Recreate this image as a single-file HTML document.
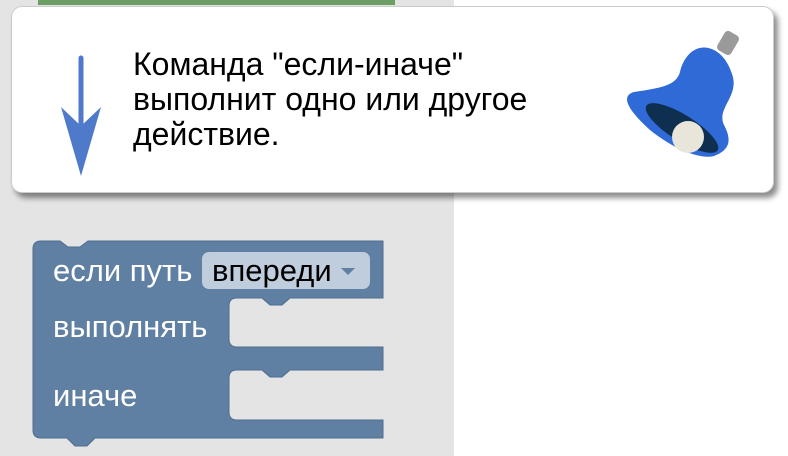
<!DOCTYPE html>
<html><head><meta charset="utf-8"><style>
html,body{margin:0;padding:0;width:788px;height:456px;overflow:hidden;background:#fff;font-family:"Liberation Sans",Arial,sans-serif}
#gray{position:absolute;left:0;top:0;width:454px;height:456px;background:#e4e4e4}
#green{position:absolute;left:38px;top:0;width:357px;height:5px;background:#6c9d64}
#tip{position:absolute;left:11px;top:6px;width:763px;height:187px;background:#fff;border-radius:11px;box-shadow:4px 5px 6px rgba(0,0,0,0.45);border:1px solid #ccc;box-sizing:border-box}
#txt{position:absolute;left:133px;top:47px;font-size:32px;line-height:35px;color:#000;white-space:nowrap}
.w{position:absolute;color:#fff;font-size:31px;line-height:34px;white-space:nowrap}
</style></head><body>
<div id="gray"></div>
<div id="green"></div>
<div id="tip"></div>
<svg style="position:absolute;left:0;top:0" width="788" height="456">
<line x1="81" y1="58" x2="81" y2="140" stroke="#4f79c9" stroke-width="5" stroke-linecap="round"/>
<path d="M61,107 L81,126 L101,107 L81,176 Z" fill="#4f79c9"/>
<rect x="720" y="32" width="16" height="22" rx="4" fill="#9a9a9a" transform="rotate(30 728 43)"/>
<path d="M714,50 C698,42 684,54 680,72 C676,86 660,88 634,92 C620,96 628,110 650,130 C672,148 700,160 714,156 C730,150 732,140 724,125 C716,108 740,96 732,74 C728,62 722,54 714,50 Z" fill="#2f6ad6"/>
<ellipse cx="682" cy="128" rx="42" ry="13" transform="rotate(32 682 128)" fill="#0f2f50"/>
<circle cx="688" cy="137" r="16" fill="#e8e6da"/>
<path d="M33,249 Q33,241 41,241 H60 L68,247 H80 L88,241 H383 V298 H290 L282,305 H270 L262,298 H237 Q229,298 229,306 V339 Q229,347 237,347 H383 V370 H290 L282,377 H270 L262,370 H237 Q229,370 229,378 V412 Q229,420 237,420 H383 V438 H95 L87,446 H75 L67,438 H41 Q33,438 33,430 Z" fill="#5f7fa3" stroke="#4e6d91" stroke-width="1"/>
<rect x="202" y="252" width="168" height="37" rx="7" fill="#c0cddd"/>
<path d="M341,268 L355,268 L348,275 Z" fill="#5f7fa3"/>
</svg>
<div id="txt">Команда "если-иначе"<br>выполнит одно или другое<br>действие.</div>
<div class="w" style="left:53px;top:254px">если путь</div>
<div class="w" style="left:212px;top:254px;color:#000">впереди</div>
<div class="w" style="left:53px;top:310px">выполнять</div>
<div class="w" style="left:53px;top:379px">иначе</div>
</body></html>
